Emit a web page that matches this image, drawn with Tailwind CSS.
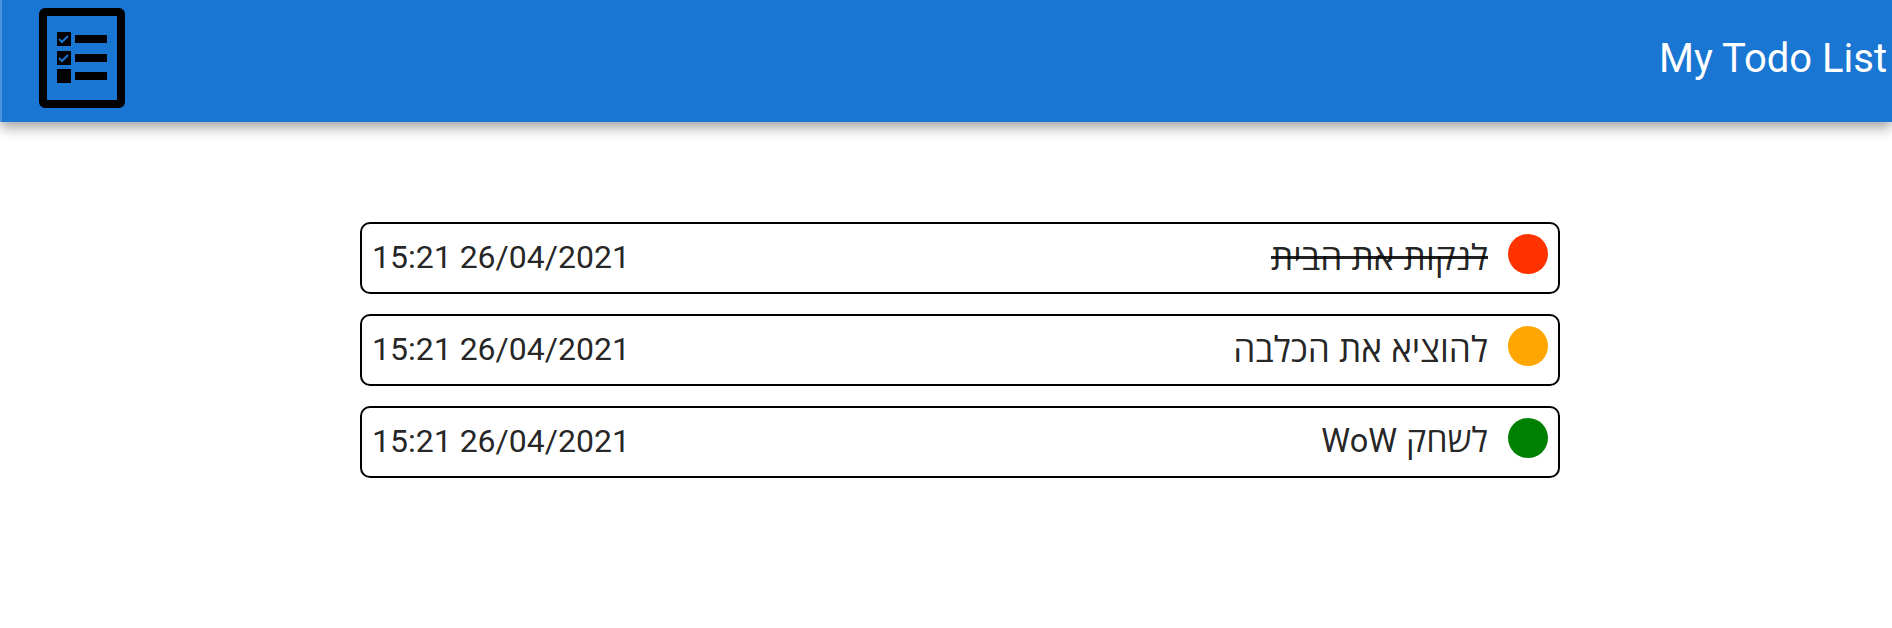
<!DOCTYPE html>
<html lang="en">
<head>
  <meta charset="UTF-8" />
  <title>My Todo List</title>
  <script src="https://cdn.jsdelivr.net/npm/@tailwindcss/browser@4"></script>
</head>
<body class="bg-white text-black/87 font-['Roboto',sans-serif] overflow-hidden">

  <!-- App bar -->
  <header class="h-[122px] bg-[#1976d2] border-l-2 border-[#4f93dc] shadow-[0_6px_12px_0_rgba(0,0,0,0.35)] flex items-start justify-between pl-[37px] pr-[5px]">
    <svg class="mt-2" width="86" height="100" viewBox="0 0 86 100">
      <rect x="4" y="4" width="78" height="92" rx="2" fill="none" stroke="#000" stroke-width="8" />
      <rect x="18" y="24" width="14" height="14" fill="#000" />
      <path d="M20 31l3 3 6-6" fill="none" stroke="#1976d2" stroke-width="2" />
      <rect x="36" y="27" width="32" height="8" fill="#000" />
      <rect x="18" y="43" width="14" height="14" fill="#000" />
      <path d="M20 50l3 3 6-6" fill="none" stroke="#1976d2" stroke-width="2" />
      <rect x="36" y="46" width="32" height="8" fill="#000" />
      <rect x="18" y="61" width="14" height="14" fill="#000" />
      <rect x="36" y="64" width="32" height="8" fill="#000" />
    </svg>
    <h1 class="text-white text-[40px] leading-[117px]">My Todo List</h1>
  </header>

  <!-- Todo items -->
  <main class="w-[1200px] ml-[360px] mt-[100px] flex flex-col gap-5">
    <div class="h-[72px] border-2 border-black rounded-[10px] flex items-center justify-between pl-[10px] pr-[10px]">
      <span class="text-[32px] mb-0.5">15:21 26/04/2021</span>
      <div class="flex items-center gap-5">
        <span dir="rtl" class="font-['Open_Sans'] text-[35.2px] line-through mb-1">לנקות את הבית</span>
        <span class="w-10 h-10 rounded-full bg-[#ff3300] mb-2"></span>
      </div>
    </div>
    <div class="h-[72px] border-2 border-black rounded-[10px] flex items-center justify-between pl-[10px] pr-[10px]">
      <span class="text-[32px] mb-0.5">15:21 26/04/2021</span>
      <div class="flex items-center gap-5">
        <span dir="rtl" class="font-['Open_Sans'] text-[35.2px] mb-1">להוציא את הכלבה</span>
        <span class="w-10 h-10 rounded-full bg-[#ffa500] mb-2"></span>
      </div>
    </div>
    <div class="h-[72px] border-2 border-black rounded-[10px] flex items-center justify-between pl-[10px] pr-[10px]">
      <span class="text-[32px] mb-0.5">15:21 26/04/2021</span>
      <div class="flex items-center gap-5">
        <span dir="rtl" class="font-['Open_Sans'] text-[34px] mb-1">לשחק <span class="font-['Roboto'] text-[32.5px]">WoW</span></span>
        <span class="w-10 h-10 rounded-full bg-[#008000] mb-2"></span>
      </div>
    </div>
  </main>

</body>
</html>
